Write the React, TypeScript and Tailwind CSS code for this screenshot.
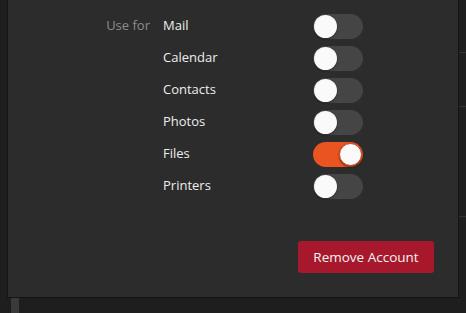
import React from 'react';

type Service = { name: string; on: boolean };

const services: Service[] = [
  { name: 'Mail', on: false },
  { name: 'Calendar', on: false },
  { name: 'Contacts', on: false },
  { name: 'Photos', on: false },
  { name: 'Files', on: true },
  { name: 'Printers', on: false },
];

const Toggle = ({ on }: { on: boolean }) => (
  <div
    className={`flex h-[25px] w-[50px] items-center rounded-full px-px ${
      on ? 'justify-end bg-[#e95420]' : 'justify-start bg-[#454545]'
    }`}
  >
    <div
      className={`h-[23px] w-[23px] rounded-full bg-[#fafafa] shadow-[0_1px_2px_rgba(0,0,0,0.45)] ${
        on ? 'border border-[#c8441a]' : ''
      }`}
    />
  </div>
);

export default function App() {
  return (
    <div
      className="flex h-[313px] w-[466px] overflow-hidden bg-[#1e1e1e] text-[13px]"
      style={{ fontFamily: '"Open Sans", "Noto Sans", sans-serif' }}
    >
      <div className="w-[7px]" />
      <div className="flex flex-col">
        <div className="flex h-[298px] w-[452px] flex-col border-x border-b border-[#141414] bg-[#2c2c2c]">
          <div className="grid grid-cols-[155px_150px_50px] pt-[10px]">
            {services.map((s, i) => (
              <React.Fragment key={s.name}>
                <div className="flex h-[32px] items-center justify-end pr-[13px] text-[#8c8c8c]">
                  {i === 0 ? 'Use for' : ''}
                </div>
                <div className="flex h-[32px] items-center text-[#eeeeee]">{s.name}</div>
                <div className="flex h-[32px] items-center">
                  <Toggle on={s.on} />
                </div>
              </React.Fragment>
            ))}
          </div>
          <div className="mt-[39px] flex justify-end pr-[24px]">
            <button className="h-[32px] w-[136px] rounded-[3px] bg-[#a8182c] text-[13.5px] text-[#f2f2f2]">
              Remove Account
            </button>
          </div>
        </div>
        <div className="flex h-[15px]">
          <div className="ml-[4px] w-[8px] bg-[#3a3a3a]" />
        </div>
      </div>
      <div className="flex w-[7px] flex-col">
        <div className="h-[53px] border-b border-[#333333]" />
        <div className="h-[54px] border-b border-[#333333]" />
        <div className="h-[110px] border-b border-[#333333]" />
      </div>
    </div>
  );
}
